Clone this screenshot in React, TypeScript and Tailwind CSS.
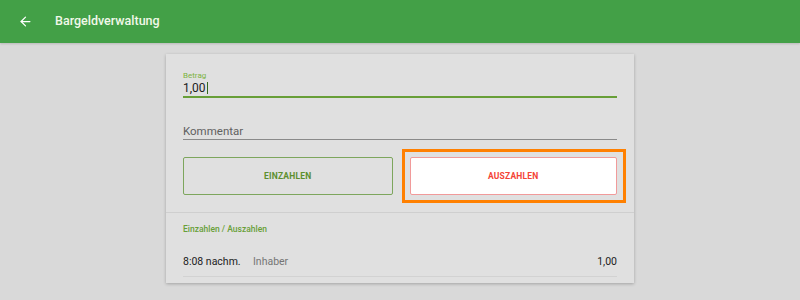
import { ArrowLeft } from 'lucide-react'

export default function App() {
  return (
    <div className="h-[300px] w-[800px] overflow-hidden bg-[#d9d9d9] font-['Roboto',sans-serif]">
      <header className="flex h-[43px] items-center bg-[#43a047] shadow-[0_1px_2px_rgba(0,0,0,0.15)]">
        <ArrowLeft className="ml-[18px] h-[15px] w-[15px] text-white" strokeWidth={2} />
        <h1 className="ml-[22px] text-[12.5px] font-medium text-[#f1f8e9]">Bargeldverwaltung</h1>
      </header>

      <main className="mx-auto mt-[11px] w-[468px] bg-[#e0e0e0] shadow-[0_1px_3px_rgba(0,0,0,0.25)]">
        <div className="px-[17px] pt-[17px]">
          <label className="block text-[8px] leading-[10px] text-[#7cb342]">Betrag</label>
          <div className="flex h-[13px] items-center text-[12px] text-[#212121]">
            1,00<span className="ml-px h-[12px] w-px bg-[#33691e]" />
          </div>
          <div className="mt-[2px] h-[2px] bg-[#689f38]" />

          <div className="mt-[26px] text-[11.5px] leading-[14px] text-[#616161]">Kommentar</div>
          <div className="mt-px h-px bg-[#8a8a8a]" />

          <div className="mt-[17px] flex gap-[17px]">
            <button className="h-[38px] flex-1 rounded-[2px] border border-[#7da65d] text-[8.5px] font-bold tracking-[0.2px] text-[#5d8f2f]">
              EINZAHLEN
            </button>
            <div className="relative flex-1">
              <button className="h-[38px] w-full rounded-[2px] border border-[#f19a9a] bg-white text-[8.5px] font-bold tracking-[0.2px] text-[#f44336]">
                AUSZAHLEN
              </button>
              <div className="pointer-events-none absolute -top-[8px] -bottom-[8px] -left-[8px] -right-[9px] border-[3px] border-[#ff8000]" />
            </div>
          </div>
        </div>

        <div className="mt-[17px] h-px bg-[#cfcfcf]" />

        <div className="px-[17px] pb-[6px]">
          <div className="mt-[11px] text-[8.5px] font-medium leading-[10px] text-[#689f38]">Einzahlen / Auszahlen</div>
          <div className="mt-[21px] flex items-center text-[10.5px] leading-[14px]">
            <span className="w-[70px] text-[#212121]">8:08 nachm.</span>
            <span className="text-[#757575]">Inhaber</span>
            <span className="ml-auto text-[#212121]">1,00</span>
          </div>
          <div className="mt-[7px] h-px bg-[#d2d2d2]" />
        </div>
      </main>
    </div>
  )
}
